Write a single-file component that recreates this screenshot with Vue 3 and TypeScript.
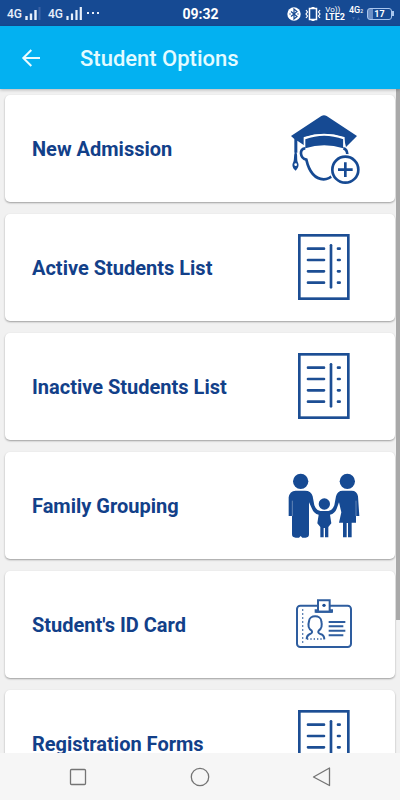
<script setup lang="ts">
type IconName = 'admission' | 'list' | 'family' | 'card'

interface Option {
  label: string
  icon: IconName
}

const options: Option[] = [
  { label: 'New Admission', icon: 'admission' },
  { label: 'Active Students List', icon: 'list' },
  { label: 'Inactive Students List', icon: 'list' },
  { label: 'Family Grouping', icon: 'family' },
  { label: "Student's ID Card", icon: 'card' },
  { label: 'Registration Forms', icon: 'list' },
]

const rows: number[] = [71, 105, 139, 173]
</script>

<template>
  <div class="screen">
    <div class="status">
      <div class="side">
        <span class="net">4G</span>
        <svg class="signal" width="16" height="14" viewBox="0 0 16 14" aria-hidden="true">
          <path d="M1.5 9v4M6 6.500v6.500M10.500 3v10" stroke="#e8f0fb" stroke-width="2.400" />
          <path d="M14.500 0v13" stroke="#3a62a4" stroke-width="2" />
        </svg>
        <span class="net second">4G</span>
        <svg class="signal" width="16" height="14" viewBox="0 0 16 14" aria-hidden="true">
          <path d="M1.500 9v4M6 6.500v6.500M10.500 3v10M14.800 0v13" stroke="#e8f0fb" stroke-width="2.200" />
        </svg>
        <svg class="dots" width="14" height="14" viewBox="0 0 14 14" aria-hidden="true">
          <path d="M1 6h2M6 6h2M11 6h2" stroke="#e8f0fb" stroke-width="2" />
        </svg>
      </div>
      <span class="clock">09:32</span>
      <div class="side right">
        <svg width="14" height="14" viewBox="0 0 14 14" aria-hidden="true">
          <circle cx="7" cy="7" r="6.700" fill="#fff" />
          <path d="M4 4.500l6 5-3 2.500V2l3 2.500-6 5" fill="none" stroke="#164a93" stroke-width="1.200" />
          <path d="M2.300 7h1.400M10.300 7h1.400" stroke="#164a93" stroke-width="1.200" />
        </svg>
        <svg width="16" height="14" viewBox="0 0 16 14" aria-hidden="true">
          <path d="M4.500 1.500h7v11h-7z" fill="none" stroke="#fff" stroke-width="1.500" />
          <path d="M6.500 1h3M6.500 13h3" stroke="#fff" stroke-width="2" />
          <path d="M1 3l1.500 2L1 7l1.500 2L1 11M15 3l-1.500 2L15 7l-1.500 2 1.500 2" fill="none" stroke="#fff" stroke-width="1.200" />
        </svg>
        <span class="volte"><span class="vo">Vo))</span><span class="lte">LTE2</span></span>
        <span class="data"><span class="gen">4G<small>2</small></span>
          <svg width="10" height="5" viewBox="0 0 10 5" aria-hidden="true">
            <path d="M1 1h3L2.500 4zM6 4h3L7.500 1z" fill="#3b66a8" />
          </svg>
        </span>
        <span class="battery"><span class="cell">17</span></span>
      </div>
    </div>

    <header class="bar">
      <button class="back" type="button" aria-label="Back">
        <svg width="20" height="20" viewBox="0 0 20 20" aria-hidden="true">
          <path d="M20 10H3.500M11.300 2L3.300 10l8 8" fill="none" stroke="#e9fbff" stroke-width="2" />
        </svg>
      </button>
      <h1>Student Options</h1>
    </header>

    <main class="body">
      <div class="list">
        <button v-for="option in options" :key="option.label" class="card" type="button">
          <span class="label">{{ option.label }}</span>

          <svg v-if="option.icon === 'admission'" class="icon" viewBox="0 -30 270 321" aria-hidden="true">
            <path d="M33 93L124 33Q132 29 140 33L231 93L198 126L191 97Q132 77 74 97L72 121L52 107V143H43V102Z" fill="#164a93" />
            <path d="M76 130V103Q132 81 190 103V130Q132 112 76 130Z" fill="#164a93" />
            <path d="M73 129V98Q132 78 192 98V126" fill="none" stroke="#fff" stroke-width="4" />
            <path d="M47 140C54 145 50 161 53 171C59 181 54 190 47 197C39 191 34 181 40 171C44 161 40 145 47 140Z" fill="#164a93" />
            <circle cx="47" cy="179" r="4" fill="#fff" />
            <path d="M76 130C57 130 59 160 79 164C88 203 106 222 131 223C143 223 152 218 161 209M190 130Q201 132 202 148" fill="none" stroke="#164a93" stroke-width="8" />
            <circle cx="196" cy="194" r="47" fill="#fff" />
            <circle cx="196" cy="194" r="39" fill="#fff" stroke="#164a93" stroke-width="8" />
            <path d="M196 172v44M174 194h44" stroke="#164a93" stroke-width="8" />
          </svg>

          <svg v-else-if="option.icon === 'list'" class="icon" viewBox="0 -33 270 321" aria-hidden="true">
            <rect x="58" y="31" width="147" height="190" fill="none" stroke="#1c4e94" stroke-width="8" />
            <g stroke="#1c4e94" stroke-width="8" stroke-linecap="round">
              <path v-for="y in rows" :key="y" :d="`M84 ${y}H132M174 ${y}H179`" />
              <path d="M153 61V187" />
            </g>
          </svg>

          <svg v-else-if="option.icon === 'family'" class="icon" viewBox="0 -24 270 321" aria-hidden="true">
            <g fill="#164a93">
              <circle cx="62" cy="64" r="23" />
              <circle cx="202" cy="64" r="23" />
              <circle cx="133" cy="132" r="17" />
              <path d="M47 92H75Q94 92 98 109L103 136Q108 151 121 153H145Q158 151 163 136L168 109Q172 92 188 92H215Q231 92 234 109L238 168H228V188H215V232H204V189H200V232H189V188H177L184 157L177 127L170 146Q165 160 150 164L154 190L145 201V232H135V204H131V232H121V201L112 190L116 164Q101 160 96 146L87 127V223Q87 233 77 233H67L62 228L57 233H47Q36 233 36 223V168H26V112Q29 93 47 92Z" />
            </g>
            <path d="M37 122V168M228 122V168" stroke="#fff" stroke-width="1" />
          </svg>

          <svg v-else class="icon" viewBox="0 -42 270 321" aria-hidden="true">
            <g fill="none" stroke="#2e5d9f" stroke-width="6">
              <rect x="51" y="62" width="162" height="124" rx="10" />
              <path d="M107 80V76H114V46H149V76H156V80Z" fill="#fff" />
              <path d="M107 80H156M146 111H196M146 124H190M146 137H196M146 151H190" />
              <path d="M80 163Q80 151 90 147Q99 144 95 137C87 132 82 125 87 109C88 89 123 89 124 109C128 125 124 132 116 137Q112 144 121 147Q133 150 133 163" />
              <path d="M68 73V176" stroke-width="4" stroke-dasharray="4 8" />
              <path d="M81 162H133" stroke-width="4" stroke-dasharray="4 6" />
            </g>
            <circle cx="132" cy="61" r="5" fill="#164a93" />
          </svg>
        </button>
      </div>
      <div class="thumb"></div>
    </main>

    <nav class="nav">
      <button type="button" aria-label="Recent apps">
        <svg width="20" height="20" viewBox="0 0 20 20" aria-hidden="true">
          <rect x="2.500" y="2.500" width="15" height="15" rx="1" />
        </svg>
      </button>
      <button type="button" aria-label="Home">
        <svg width="20" height="20" viewBox="0 0 20 20" aria-hidden="true">
          <circle cx="10" cy="10" r="8.700" />
        </svg>
      </button>
      <button type="button" aria-label="Go back">
        <svg width="20" height="20" viewBox="0 0 20 20" aria-hidden="true">
          <path d="M17.500 1V18.500L1.500 10Z" stroke-linejoin="round" />
        </svg>
      </button>
    </nav>
  </div>
</template>

<style>
body {
  margin: 0;
}
</style>

<style scoped>
.screen {
  display: flex;
  flex-direction: column;
  height: 100vh;
  background: #f1f1f1;
  font-family: Roboto, "Liberation Sans", sans-serif;
}

svg {
  display: block;
  flex: none;
}

button {
  margin: 0;
  padding: 0;
  border: 0;
  background: none;
  font: inherit;
  cursor: pointer;
}

.status {
  display: flex;
  align-items: center;
  flex: none;
  box-sizing: border-box;
  height: 26px;
  padding: 1px 6px 0 7px;
  background: #164a93;
  color: #fff;
}

.side {
  display: flex;
  flex: 1;
  align-items: center;
}

.right {
  justify-content: flex-end;
  gap: 4px;
}

.net {
  margin-right: 3px;
  color: #e8f0fb;
  font-size: 12px;
  font-weight: 500;
  line-height: 16px;
}

.second {
  margin-left: 7px;
}

.dots {
  margin-left: 4px;
}

.clock {
  font-size: 14px;
  font-weight: 700;
  line-height: 20px;
}

.volte,
.data {
  display: flex;
  flex-direction: column;
}

.vo {
  font-size: 8px;
  line-height: 7px;
}

.lte {
  font-size: 9px;
  font-weight: 700;
  line-height: 8px;
}

.data {
  align-items: center;
}

.gen {
  font-size: 9px;
  font-weight: 500;
  line-height: 9px;
}

.gen small {
  font-size: 5px;
}

.battery {
  display: flex;
  align-items: center;
}

.cell {
  box-sizing: border-box;
  width: 25px;
  height: 12px;
  border: 1px solid #a9c6ee;
  border-radius: 3px;
  background: linear-gradient(90deg, #6b8fc5 5px, transparent 5px);
  font-size: 9px;
  font-weight: 700;
  line-height: 10px;
  text-align: center;
}

.battery::after {
  width: 2px;
  height: 5px;
  background: #a9c6ee;
  content: "";
}

.bar {
  display: flex;
  z-index: 1;
  flex: none;
  align-items: center;
  height: 63px;
  padding: 0 20px;
  background: #03b1f1;
  box-shadow: 0 1px 3px rgba(0, 0, 0, 0.25);
}

.back {
  width: 60px;
}

h1 {
  margin: 2px 0 0;
  color: #e4fbff;
  font-size: 22px;
  font-weight: 500;
  line-height: 28px;
}

.body {
  position: relative;
  flex: 1;
  min-height: 0;
}

.list {
  display: flex;
  box-sizing: border-box;
  flex-direction: column;
  gap: 12px;
  height: 100%;
  padding: 6px 5px;
  overflow-y: auto;
  scrollbar-width: none;
}

.card {
  display: flex;
  flex: none;
  align-items: center;
  justify-content: space-between;
  height: 107px;
  padding: 0 25px 0 27px;
  border-radius: 5px;
  background: #fff;
  box-shadow: 0 1px 2px rgba(0, 0, 0, 0.35);
  text-align: left;
}

.label {
  color: #124089;
  font-size: 20px;
  font-weight: 700;
  line-height: 28px;
}

.icon {
  width: 90px;
  height: 107px;
}

.thumb {
  position: absolute;
  top: 0;
  right: 0;
  width: 4px;
  height: 80%;
  background: #a9a9a9;
}

.nav {
  display: flex;
  z-index: 1;
  flex: none;
  align-items: center;
  justify-content: center;
  gap: 102px;
  height: 47px;
  background: #f6f6f6;
}

.nav svg {
  fill: none;
  stroke: #747474;
  stroke-width: 1.3px;
}
</style>
